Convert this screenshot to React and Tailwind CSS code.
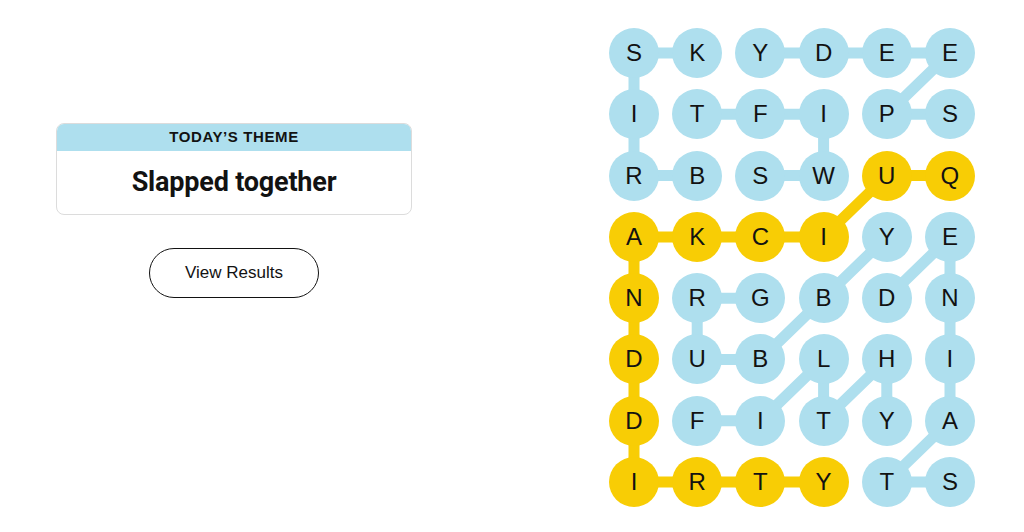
import React from "react";

// Strands board: 8 rows x 6 columns of letters
const ROWS = [
  "SKYDEE",
  "ITFIPS",
  "RBSWUQ",
  "AKCIYE",
  "NRGBDN",
  "DUBLHI",
  "DFITYA",
  "IRTYTS",
];

// Found words as [row, col] paths
const WORDS = [
  { spangram: false, path: [[2, 1], [2, 0], [1, 0], [0, 0], [0, 1]] }, // BRISK
  { spangram: false, path: [[2, 2], [2, 3], [1, 3], [1, 2], [1, 1]] }, // SWIFT
  { spangram: false, path: [[1, 5], [1, 4], [0, 5], [0, 4], [0, 3], [0, 2]] }, // SPEEDY
  { spangram: false, path: [[6, 1], [6, 2], [5, 3], [6, 3], [5, 4], [6, 4]] }, // FILTHY
  { spangram: false, path: [[4, 2], [4, 1], [5, 1], [5, 2], [4, 3], [3, 4]] }, // GRUBBY
  { spangram: false, path: [[7, 5], [7, 4], [6, 5], [5, 5], [4, 5], [3, 5], [4, 4]] }, // STAINED
  {
    spangram: true,
    path: [
      [2, 5], [2, 4], [3, 3], [3, 2], [3, 1], [3, 0], [4, 0],
      [5, 0], [6, 0], [7, 0], [7, 1], [7, 2], [7, 3],
    ],
  }, // QUICKANDDIRTY
];

const BLUE = "#aedfee";
const YELLOW = "#f8cd05";
const CELL = 50;
const COL_STEP = 63.2;
const ROW_STEP = 61.3;

const spangramCells = new Set(
  WORDS.filter((w) => w.spangram).flatMap((w) => w.path.map(([r, c]) => `${r}-${c}`))
);

function Connectors() {
  const pt = ([r, c]) => [CELL / 2 + c * COL_STEP, CELL / 2 + r * ROW_STEP];
  return (
    <svg className="absolute inset-0 h-full w-full" aria-hidden="true">
      {WORDS.map((w, i) => (
        <polyline
          key={i}
          points={w.path.map((p) => pt(p).join(",")).join(" ")}
          fill="none"
          stroke={w.spangram ? YELLOW : BLUE}
          strokeWidth={11}
          strokeLinejoin="round"
          strokeLinecap="round"
        />
      ))}
    </svg>
  );
}

function Board() {
  return (
    <div className="relative">
      <Connectors />
      <div className="relative grid grid-cols-[repeat(6,50px)] gap-x-[13.2px] gap-y-[11.3px]">
        {ROWS.flatMap((row, r) =>
          row.split("").map((ch, c) => (
            <div
              key={`${r}-${c}`}
              className={
                "flex h-[50px] w-[50px] items-center justify-center rounded-full text-[24px] leading-none text-[#121212] " +
                (spangramCells.has(`${r}-${c}`) ? "bg-[#f8cd05]" : "bg-[#aedfee]")
              }
            >
              {ch}
            </div>
          ))
        )}
      </div>
    </div>
  );
}

export default function App() {
  return (
    <div className="flex h-[532px] w-full bg-white pt-[28px] font-['Liberation_Sans',Arial,sans-serif] text-[#121212]">
      <div className="flex w-[468px] flex-col items-center pt-[95px]">
        <div className="w-[356px] overflow-hidden rounded-lg border border-[#dcdcdc] bg-white">
          <div className="flex h-[27px] items-center justify-center bg-[#aedfee] text-[15px] font-bold tracking-[0.6px] uppercase">
            Today’s Theme
          </div>
          <div className="flex h-[63px] items-center justify-center font-['Roboto',sans-serif] text-[27px] font-bold tracking-[-0.2px]">
            Slapped together
          </div>
        </div>
        <button className="mt-[33px] flex h-[50px] w-[170px] items-center justify-center rounded-full border border-[#121212] text-[17px]">
          View Results
        </button>
      </div>
      <div className="ml-[141px]">
        <Board />
      </div>
    </div>
  );
}
